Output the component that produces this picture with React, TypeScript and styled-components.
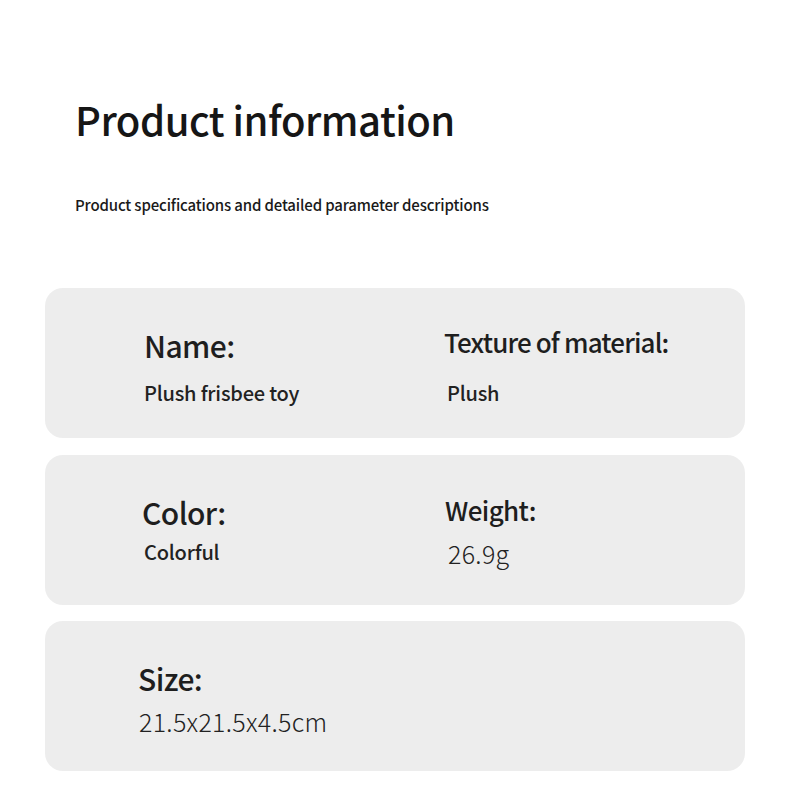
import React from "react";
import styled, { createGlobalStyle } from "styled-components";

const Global = createGlobalStyle`
  html, body { margin: 0; padding: 0; background: #ffffff; }
  body { font-family: "Noto Sans CJK SC", "Noto Sans", sans-serif; color: #1d1d1d; }
`;

const Page = styled.div`
  width: 790px;
  height: 788px;
  box-sizing: border-box;
  padding: 89px 45px 0 45px;
  display: flex;
  flex-direction: column;
`;

const Title = styled.h1`
  margin: 0 0 0 30px;
  font-size: 40px;
  font-weight: 500;
  line-height: 60px;
  letter-spacing: -0.5px;
  color: #161616;
`;

const Subtitle = styled.p`
  margin: 45px 0 0 30px;
  font-size: 15px;
  font-weight: 500;
  line-height: 22px;
  letter-spacing: -0.15px;
  color: #1a1a1a;
`;

const Cards = styled.div`
  margin-top: 72px;
  display: flex;
  flex-direction: column;
  gap: 16.5px;
`;

const Card = styled.section`
  height: 150px;
  box-sizing: border-box;
  background: #ededed;
  border-radius: 18px;
  padding-left: 99px;
  display: grid;
  grid-template-columns: 300px 1fr;
  align-items: start;
`;

const Field = styled.div<{ $top: number; $dx?: number }>`
  padding-top: ${(p) => p.$top}px;
  margin-left: ${(p) => p.$dx ?? 0}px;
  display: flex;
  flex-direction: column;
`;

const Label = styled.div<{ $size: number; $track?: number }>`
  font-size: ${(p) => p.$size}px;
  font-weight: 500;
  line-height: 1.15;
  letter-spacing: ${(p) => p.$track ?? -0.6}px;
  color: #1e1e1e;
`;

const Value = styled.div<{ $size: number; $weight: number; $gap: number; $dx?: number; $track?: number }>`
  margin-top: ${(p) => p.$gap}px;
  margin-left: ${(p) => p.$dx ?? 0}px;
  font-size: ${(p) => p.$size}px;
  font-weight: ${(p) => p.$weight};
  line-height: 1.15;
  letter-spacing: ${(p) => p.$track ?? -0.2}px;
  color: #222;
`;

export default function App() {
  return (
    <>
      <Global />
      <Page>
        <Title>Product information</Title>
        <Subtitle>Product specifications and detailed parameter descriptions</Subtitle>
        <Cards>
          <Card>
            <Field $top={40}>
              <Label $size={30}>Name:</Label>
              <Value $size={20} $weight={500} $gap={18}>Plush frisbee toy</Value>
            </Field>
            <Field $top={39}>
              <Label $size={26} $track={-0.85}>Texture of material:</Label>
              <Value $size={20} $weight={500} $gap={24} $dx={3}>Plush</Value>
            </Field>
          </Card>
          <Card>
            <Field $top={40} $dx={-2}>
              <Label $size={30}>Color:</Label>
              <Value $size={20} $weight={500} $gap={11} $dx={2}>Colorful</Value>
            </Field>
            <Field $top={40} $dx={1}>
              <Label $size={26}>Weight:</Label>
              <Value $size={25} $weight={300} $gap={15} $dx={3} $track={0.3}>26.9g</Value>
            </Field>
          </Card>
          <Card>
            <Field $top={40} $dx={-6}>
              <Label $size={30}>Size:</Label>
              <Value $size={25} $weight={300} $gap={11} $dx={1} $track={0.3}>21.5x21.5x4.5cm</Value>
            </Field>
          </Card>
        </Cards>
      </Page>
    </>
  );
}
